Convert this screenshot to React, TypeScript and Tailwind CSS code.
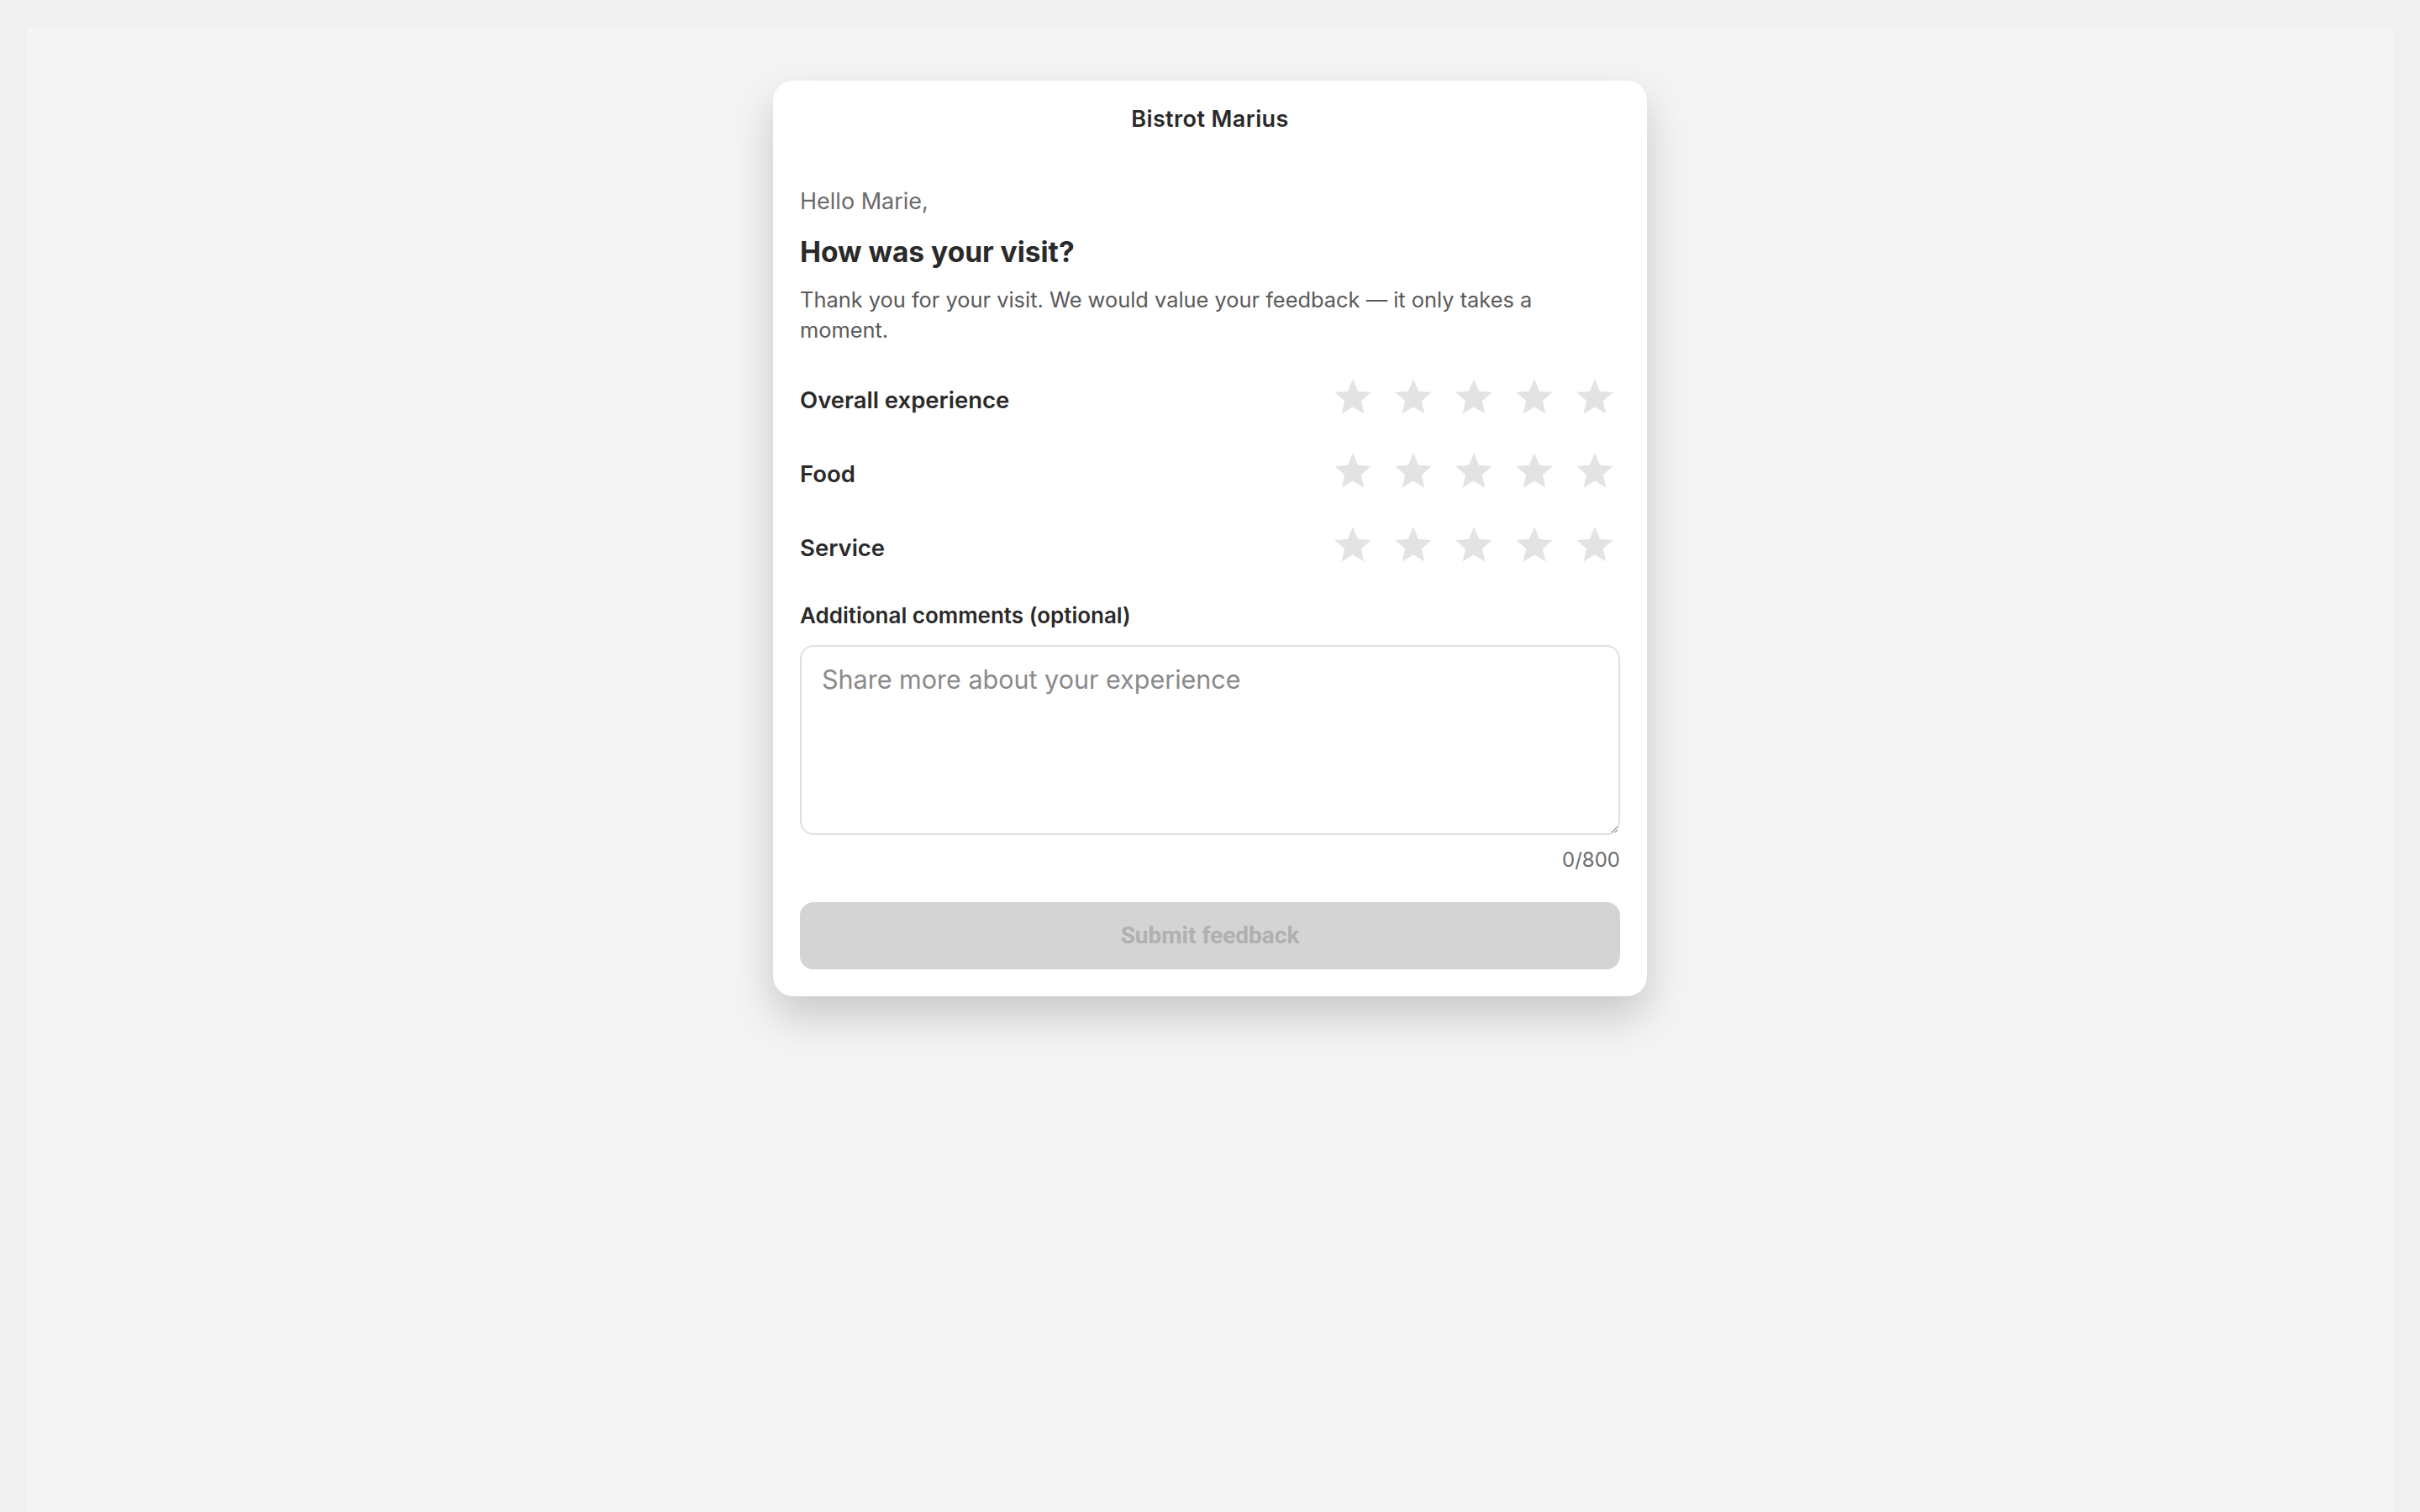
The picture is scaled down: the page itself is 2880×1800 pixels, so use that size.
import { useState } from 'react'

const categories = ['Overall experience', 'Food', 'Service']

function Star({ filled }: { filled: boolean }) {
  return (
    <svg viewBox="0 0 24 24" className="w-[52px] h-[52px]" fill={filled ? '#f5b301' : '#e3e3e3'}>
      <path d="M12 17.27L18.18 21l-1.64-7.03L22 9.24l-7.19-.61L12 2 9.19 8.63 2 9.24l5.46 4.73L5.82 21z" />
    </svg>
  )
}

function RatingRow({ label, value, onChange }: { label: string; value: number; onChange: (v: number) => void }) {
  return (
    <div className="flex items-center justify-between h-[60px]">
      <span className="text-[27.5px] leading-[40px] font-semibold text-[#2a2a2a]">{label}</span>
      <div className="flex items-center gap-[12px]">
        {[1, 2, 3, 4, 5].map((n) => (
          <button key={n} onClick={() => onChange(n)} className="px-[4px] pt-[1px] pb-[7px] cursor-pointer">
            <Star filled={n <= value} />
          </button>
        ))}
      </div>
    </div>
  )
}

export default function App() {
  const [ratings, setRatings] = useState<Record<string, number>>({})
  const [comment, setComment] = useState('')

  const canSubmit = categories.every((c) => ratings[c] > 0)

  return (
    <div className="min-h-screen bg-[#f0f0f0] p-[32px] font-['Inter',sans-serif]">
      <div className="min-h-[1800px] bg-[#f4f4f4] pt-[64px]">
        <div className="w-[1040px] mx-auto bg-white rounded-[24px] shadow-[0_24px_50px_rgba(0,0,0,0.18)]">
          {/* Header */}
          <div className="pt-[28px] text-center text-[27px] leading-[36px] font-semibold tracking-[0.4px] text-[#2a2a2a]">
            Bistrot Marius
          </div>

          <div className="px-[32px] pt-[60px] pb-[32px]">
            <p className="text-[27px] leading-[40px] text-[#6b6b6b]">Hello Marie,</p>
            <h1 className="mt-[18px] text-[33.5px] leading-[44px] font-bold text-[#2a2a2a]">How was your visit?</h1>
            <p className="mt-[17px] max-w-[900px] text-[25.4px] leading-[36px] text-[#5a5a5a]">
              Thank you for your visit. We would value your feedback — it only takes a moment.
            </p>

            <div className="mt-[35px] flex flex-col gap-[28px]">
              {categories.map((c) => (
                <RatingRow
                  key={c}
                  label={c}
                  value={ratings[c] ?? 0}
                  onChange={(v) => setRatings((prev) => ({ ...prev, [c]: v }))}
                />
              ))}
            </div>

            <label className="block mt-[33px] text-[26px] leading-[36px] font-semibold text-[#2a2a2a]">
              Additional comments (optional)
            </label>
            <textarea
              value={comment}
              maxLength={800}
              onChange={(e) => setComment(e.target.value)}
              placeholder="Share more about your experience"
              className="block mt-[17px] w-full h-[226px] border-2 border-[#e0e0e0] rounded-[16px] px-[24px] pt-[18px] pb-[14px] text-[30.5px] leading-[42px] text-[#2a2a2a] placeholder:text-[#8a8a8a] outline-none"
            />
            <div className="mt-[14px] text-right text-[24px] leading-[32px] text-[#6b6b6b]">
              {comment.length}/800
            </div>

            <button
              disabled={!canSubmit}
              className="mt-[34px] w-full h-[80px] rounded-[16px] bg-[#d4d4d4] text-[#b0b0b0] text-[28px] font-bold font-['Roboto',sans-serif]"
            >
              Submit feedback
            </button>
          </div>
        </div>
      </div>
    </div>
  )
}
